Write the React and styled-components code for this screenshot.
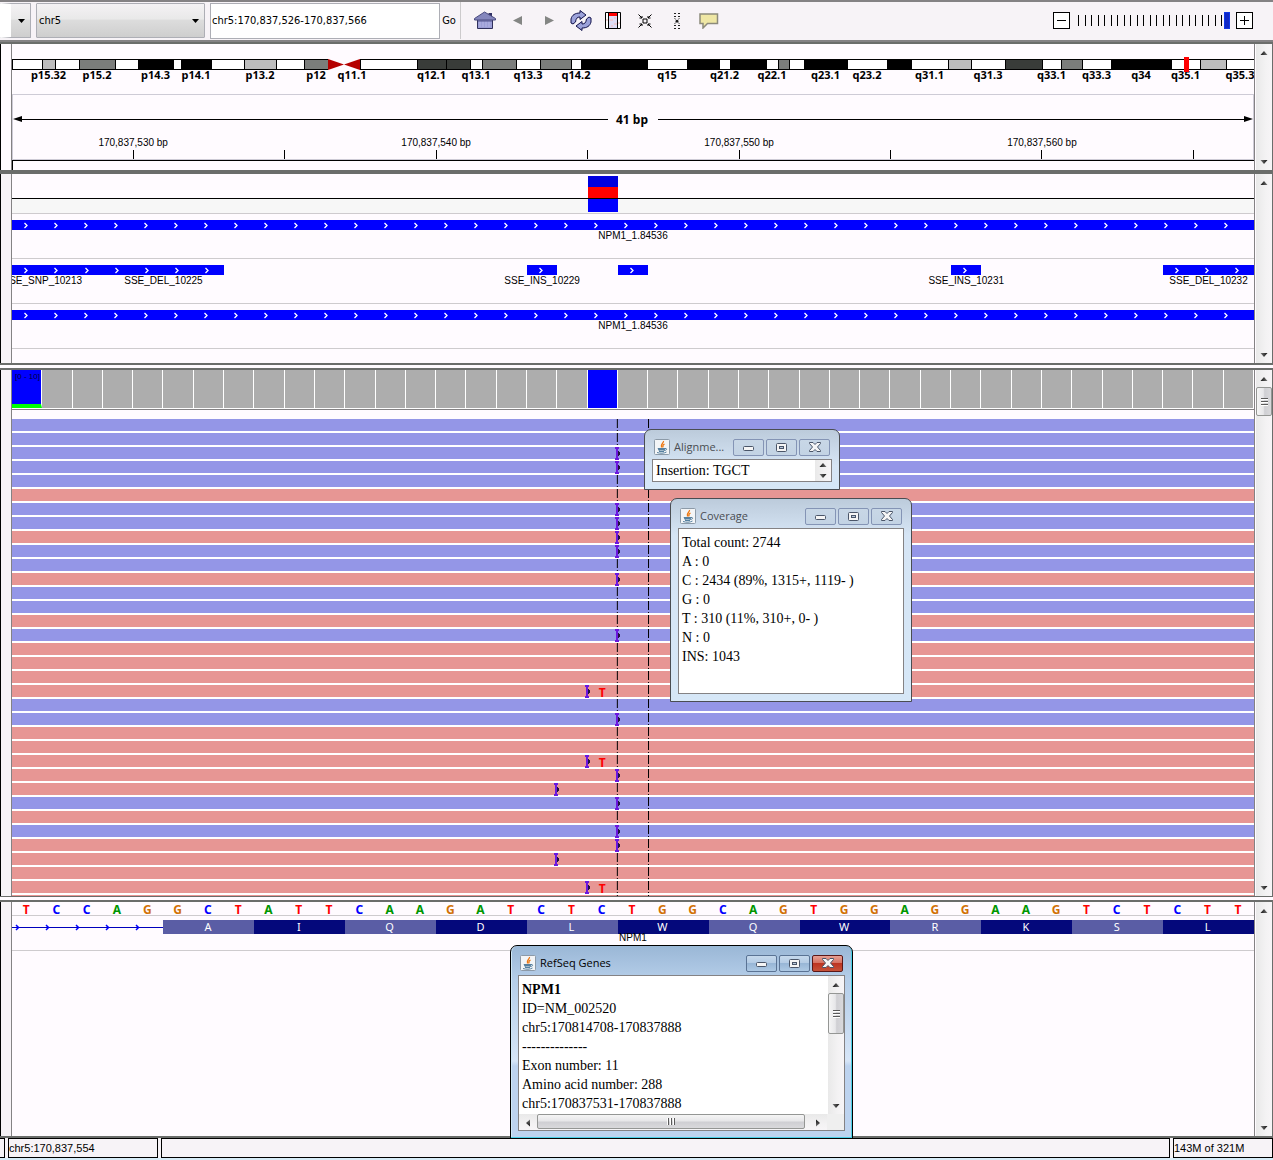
import React from 'react';
import styled, { createGlobalStyle, css } from 'styled-components';

const GlobalStyle = createGlobalStyle`
  * {
    box-sizing: border-box;
  }
  body {
    margin: 0;
    background: #fffbff;
    color: #000;
    font-family: 'DejaVu Sans Condensed', 'Noto Sans', sans-serif;
    font-size: 11px;
  }
  button, input, select {
    font: inherit;
    color: inherit;
    margin: 0;
    padding: 0;
  }
`;

const shades = {
  w: '#ffffff',
  l: '#bdbdbd',
  g: '#7b7d7b',
  d: '#393c39',
  k: '#000000',
};

// start position, stain, label
const bands = [
  [12, 'w'], [42, 'l', 'p15.32'], [55, 'w'], [79, 'g', 'p15.2'], [115, 'w'],
  [138, 'k', 'p14.3'], [173, 'w'], [181, 'k', 'p14.1'], [211, 'w'],
  [244, 'l', 'p13.2'], [276, 'w'], [304, 'g', 'p12'], [328, 'right'],
  [344, 'left', 'q11.1'], [360, 'w'], [417, 'd', 'q12.1'], [446, 'd'],
  [470, 'w', 'q13.1'], [482, 'g'], [516, 'w', 'q13.3'], [540, 'g'],
  [571, 'w', 'q14.2'], [581, 'k'], [647, 'w', 'q15'], [687, 'k'],
  [719, 'w', 'q21.2'], [730, 'k'], [766, 'w', 'q22.1'], [778, 'g'],
  [789, 'w'], [804, 'k', 'q23.1'], [847, 'w', 'q23.2'], [887, 'k'],
  [911, 'w', 'q31.1'], [948, 'l'], [971, 'w', 'q31.3'], [1005, 'd'],
  [1042, 'w', 'q33.1'], [1061, 'g'], [1082, 'w', 'q33.3'],
  [1111, 'k', 'q34'], [1171, 'w', 'q35.1'], [1200, 'l'], [1226, 'w', 'q35.3'],
];
const bandsEnd = 1254;

const marks = [
  '170,837,530 bp', '', '170,837,540 bp', '', '170,837,550 bp', '',
  '170,837,560 bp', '',
];

const wholeGene = [{ from: 1, to: 42, label: 'NPM1_1.84536' }];
const variants = [
  { from: 1, to: 3, label: 'SSE_SNP_10213' },
  { from: 3, to: 4 },
  { from: 4, to: 8, label: 'SSE_DEL_10225' },
  { from: 18, to: 19, label: 'SSE_INS_10229' },
  { from: 21, to: 22 },
  { from: 32, to: 33, label: 'SSE_INS_10231' },
  { from: 39, to: 42, label: 'SSE_DEL_10232' },
];

const strands = 'BBBBBPBBPBBPBBPBPPPPBBPPPPPBPBPPPPP'.split('');
const insertions = {
  2: 21, 3: 21, 6: 21, 7: 21, 8: 21, 9: 21, 11: 21, 15: 21, 19: 20, 21: 21,
  24: 20, 25: 21, 26: 19, 27: 21, 29: 21, 30: 21, 31: 19, 33: 20,
};
const mismatches = [19, 24, 33];

const sequence = 'TCCAGGCTATTCAAGATCTCTGGCAGTGGAGGAAGTCTCTT'.split('');
const baseColors = { A: '#009600', C: '#0000ff', G: '#d17105', T: '#ff0000' };
const aminoAcids = 'AIQDLWQWRKSL'.split('');

/* ---------- toolbar ---------- */

const Page = styled.div`
  position: relative;
  display: flex;
  flex-direction: column;
  min-height: 100vh;
  overflow: hidden;
`;

const Toolbar = styled.header`
  display: flex;
  align-items: center;
  height: 42px;
  padding: 0 20px 1px 0;
  background: #f7f3f7;
  border-top: 2px solid #848284;
  border-bottom: 2px solid #848284;
`;

const SelectBox = styled.div`
  display: grid;
  align-items: center;
  width: ${({ $width }) => $width}px;
  margin-right: 5px;
  > * {
    grid-area: 1 / 1;
  }
  svg {
    justify-self: end;
    margin-right: 6px;
    pointer-events: none;
  }
`;

const Select = styled.select`
  appearance: none;
  width: 100%;
  height: 35px;
  padding-left: 2px;
  border: 1px solid #adaeb5;
  border-radius: 1px;
  background: linear-gradient(#f4f2f4, #e9e9e9 45%, #dcdcdc 50%, #cecece);
  ${({ $editable }) =>
    $editable &&
    css`
      border-left: 11px solid #fff;
    `}
`;

const Locus = styled.input`
  width: 230px;
  height: 36px;
  padding-left: 1px;
  border: 1px solid #adaeb5;
  background: #fff;
`;

const GoButton = styled.button`
  width: 21px;
  height: 37px;
  margin-right: 8px;
  padding-right: 2px;
  border: 0;
  border-right: 1px solid #cccacc;
  background: transparent;
`;

const IconButton = styled.button`
  display: flex;
  align-items: center;
  justify-content: center;
  width: 32px;
  height: 32px;
  border: 0;
  background: transparent;
`;

const Zoom = styled.div`
  display: flex;
  gap: 6px;
  margin-left: auto;
`;

const ZoomButton = styled.button`
  display: flex;
  align-items: center;
  justify-content: center;
  width: 17px;
  height: 17px;
  border: 1px solid #000;
  background: #fff;
`;

const Slider = styled.div`
  display: grid;
  align-items: center;
  width: 154px;
  > * {
    grid-area: 1 / 1;
  }
`;

const Ticks = styled.div`
  display: flex;
  justify-content: space-between;
  height: 11px;
  padding: 0 8px 0 2px;
  i {
    width: 1px;
    background: #000;
  }
`;

const Range = styled.input`
  appearance: none;
  width: 100%;
  height: 17px;
  background: transparent;
  &::-webkit-slider-thumb {
    appearance: none;
    width: 6px;
    height: 17px;
    border: 1px solid #1038e7;
    background: #1028c6;
  }
`;

/* ---------- panels ---------- */

const Panel = styled.section`
  display: grid;
  grid-template-columns: 12px minmax(0, 1fr) 19px;
  flex: ${({ $grow }) => ($grow ? '1 0 auto' : 'none')};
  height: ${({ $height }) => ($height ? `${$height}px` : 'auto')};
  margin-top: ${({ $gap }) => ($gap ? 3 : 0)}px;
  border: 0 solid #6b6d6b;
  border-top-width: ${({ $top }) => $top || 2}px;
  border-bottom-width: ${({ $bottom }) => $bottom || 0}px;
`;

const Gutter = styled.div`
  border-left: 1px solid #000;
  border-right: 1px solid #848284;
  background: ${({ $plain }) => ($plain ? '#fffbff' : '#f7f3f7')};
`;

const Canvas = styled.div`
  position: relative;
  overflow: hidden;
  min-width: 0;
`;

const Rail = styled.div`
  display: flex;
  padding-left: 1px;
  border-left: 1px solid #848284;
  border-right: 1px solid #6b6d6b;
`;

const Bar = styled.div`
  display: flex;
  flex-direction: ${({ $across }) => ($across ? 'row' : 'column')};
  justify-content: space-between;
  flex: 1;
  background: linear-gradient(${({ $across }) => ($across ? '180deg' : '90deg')}, #e9e9e9, #f3f2f3 60%, #f7f5f7);
`;

const BarButton = styled.button`
  display: flex;
  align-items: center;
  justify-content: center;
  width: ${({ $across }) => ($across ? '18px' : '100%')};
  height: ${({ $short }) => ($short ? 11 : 17)}px;
  border: 0;
  background: transparent;
`;

const Thumb = styled.div`
  display: flex;
  align-items: center;
  justify-content: center;
  width: ${({ $across }) => ($across ? '268px' : '100%')};
  height: ${({ $across, $size }) => ($across ? 15 : $size)}px;
  margin-${({ $across }) => ($across ? 'right' : 'bottom')}: auto;
  border: 1px solid #949694;
  border-radius: 2px;
  background: linear-gradient(${({ $across }) => ($across ? '180deg' : '90deg')}, #f5f5f5, #e7e7e9 45%, #cfcfd3 55%, #d9d9dc);
  svg {
    transform: rotate(${({ $across }) => ($across ? 90 : 0)}deg);
  }
`;

const GenomeGrid = styled.div`
  display: grid;
  grid-template-columns: repeat(41, minmax(0, 1fr));
`;

/* ---------- ideogram and ruler ---------- */

const Ideogram = styled.div`
  display: flex;
  height: 50px;
  padding-top: 15px;
`;

const Band = styled.div`
  display: flex;
  flex-direction: column;
  align-items: center;
  flex: ${({ $size }) => $size} 1 0;
  min-width: 0;
  font: bold 11px/10px 'Noto Sans', sans-serif;
  white-space: nowrap;
  svg {
    display: block;
    width: 100%;
    height: 11px;
    flex: none;
  }
`;

const Stain = styled.div`
  width: 100%;
  height: 11px;
  flex: none;
  border: 1px solid #000;
  border-right: 0;
  background: ${({ $shade }) => shades[$shade]};
`;

const Position = styled.div`
  position: absolute;
  top: 13px;
  left: 94%;
  width: 5px;
  height: 15px;
  margin-left: 5px;
  background: #f00;
`;

const Ruler = styled.div`
  height: 66px;
  padding: 17px 0 1px;
  box-shadow: inset 0 0 0 1px #cecbd6;
`;

const Span = styled.div`
  display: flex;
  align-items: center;
  height: 16px;
  margin-bottom: 8px;
  padding: 0 1px;
  font: bold 12px/16px 'Noto Sans', sans-serif;
  span {
    width: 50px;
    padding: 2px 2px 0 0;
    text-align: center;
  }
`;

const Line = styled.div`
  flex: 1;
  height: 1px;
  background: #000;
`;

const Mark = styled.div`
  grid-column: ${({ $at }) => $at} / span 2;
  display: flex;
  flex-direction: column;
  align-items: center;
  justify-content: flex-end;
  height: 24px;
  font: 10px/14px 'Liberation Sans', sans-serif;
  white-space: nowrap;
  &::after {
    content: '';
    width: 1px;
    height: 9px;
    background: #000;
  }
`;

const RulerStrip = styled.div`
  height: 11px;
  border-top: 1px solid #000;
  border-left: 1px solid #000;
`;

/* ---------- feature tracks ---------- */

const VariantTrack = styled(GenomeGrid)`
  height: 40px;
  padding-top: 2px;
  border-bottom: 1px solid #cecbce;
  background: linear-gradient(#fffbff 24px, #000 24px 25px, #f7f7f7 25px);
`;

const Allele = styled.div`
  grid-column: 20;
  height: 36px;
  background: linear-gradient(#0000de 11px, #f00 11px 22px, #000 22px 23px, #00f 23px);
`;

const Track = styled(GenomeGrid)`
  height: 45px;
  padding-top: 6px;
  border-bottom: 1px solid #cecbce;
`;

const Feature = styled.div`
  grid-column: ${({ $from }) => $from} / ${({ $to }) => $to};
  display: flex;
  flex-direction: column;
  align-items: center;
  font: 10px/12px 'Liberation Sans', sans-serif;
  white-space: nowrap;
  svg {
    display: block;
    flex: none;
    width: 100%;
    height: 10px;
    background: #00f;
  }
`;

/* ---------- alignments ---------- */

const Coverage = styled(GenomeGrid)`
  height: 40px;
  margin-bottom: 9px;
  padding-bottom: 1px;
  background: #fff;
  border-bottom: 1px solid #848284;
`;

const Depth = styled.div`
  border-right: 1px solid #fff;
  border-bottom: ${({ $first }) => ($first ? '4px solid #00ff00' : '0')};
  background: ${({ $blue }) => ($blue ? '#0000ff' : '#adadad')};
  color: #00003c;
  font: 8px/14px 'Liberation Sans', sans-serif;
  padding-left: 3px;
  white-space: nowrap;
`;

const Read = styled(GenomeGrid)`
  height: 14px;
  border-bottom: 2px solid #fff;
  background: ${({ $strand }) => ($strand === 'B' ? '#9496e7' : '#e79694')};
  > * {
    grid-row: 1;
  }
  svg {
    position: relative;
    margin-left: -3px;
  }
`;

const Mismatch = styled.b`
  grid-column: 20;
  padding-right: 1px;
  color: #f00;
  font: bold 12px/15px 'Noto Sans', sans-serif;
  text-align: center;
`;

const Guides = styled.svg`
  position: absolute;
  top: 49px;
  left: 0;
  width: 100%;
  height: 477px;
  pointer-events: none;
`;

/* ---------- sequence ---------- */

const Sequence = styled(GenomeGrid)`
  height: 14px;
  border-bottom: 1px solid #cecbce;
  font: bold 12px/15px 'Noto Sans', sans-serif;
  text-align: center;
`;

const Base = styled.span`
  padding-right: 2px;
  color: ${({ $base }) => baseColors[$base]};
`;

const Gene = styled.div`
  height: 35px;
  padding-top: 4px;
  border-bottom: 1px solid #cecbce;
  font: 10px/8px 'Liberation Sans', sans-serif;
  text-align: center;
`;

const Exon = styled(GenomeGrid)`
  height: 14px;
  font: 11px/14px 'Noto Sans', sans-serif;
  svg {
    grid-column: 1 / 6;
    width: 100%;
    height: 14px;
  }
`;

const Amino = styled.span`
  grid-column: span 3;
  padding-right: 2px;
  color: #fff;
  background: ${({ $dark }) => ($dark ? '#04087b' : '#5a5da5')};
`;

/* ---------- status bar ---------- */

const Status = styled.footer`
  display: flex;
  gap: 3px;
  height: 22px;
  background: #f7f3f7;
  border-bottom: 2px solid #d6ebf7;
  font: 11px/18px 'Liberation Sans', sans-serif;
`;

const Cell = styled.div`
  width: ${({ $width }) => ($width ? `${$width}px` : 'auto')};
  flex: ${({ $width }) => ($width ? 'none' : 1)};
  border: 1px solid #000;
  border-left-width: ${({ $open }) => ($open ? 0 : 1)}px;
  white-space: nowrap;
`;

/* ---------- floating windows ---------- */

const Window = styled.div`
  position: absolute;
  left: ${({ $x }) => $x}px;
  top: ${({ $y }) => $y}px;
  display: flex;
  flex-direction: column;
  width: ${({ $width }) => $width}px;
  height: ${({ $height }) => $height}px;
  padding: 0 7px 7px;
  border: 1px solid #4a4d52;
  border-radius: 7px 7px 0 0;
  background: linear-gradient(#bccbdb, #d6e5f5 36px, #d6e7f7);
  ${({ $active }) =>
    $active &&
    css`
      border-color: #000;
      background: linear-gradient(#9ab7d6, #b5cee9 34px, #d6e5f7 115px, #bdd3ef 120px);
      box-shadow: inset -1px -1px 0 #4acfe7, inset 1px 0 0 #cfe8f7;
    `}
`;

const TitleBar = styled.div`
  display: flex;
  align-items: center;
  gap: 2px;
  height: 29px;
  flex: none;
  padding: 5px 2px 0;
  color: ${({ $active }) => ($active ? '#000' : '#4a4d52')};
  font: 11px/16px 'Open Sans', sans-serif;
  h2 {
    flex: 1;
    margin: 0 0 0 2px;
    font: inherit;
    white-space: nowrap;
  }
`;

const WindowButton = styled.button`
  display: flex;
  align-items: center;
  justify-content: center;
  width: 31px;
  height: 17px;
  padding-top: ${({ $low }) => ($low ? 3 : 0)}px;
  border: 1px solid ${({ $active }) => ($active ? '#5a7394' : '#8494b5')};
  border-radius: 2px;
  background: ${({ $active }) =>
    $active
      ? 'linear-gradient(#c6d9ec, #b5cce5 45%, #98b6d6 50%, #adc9e4)'
      : 'linear-gradient(#c8d7e6, #c3d3e4)'};
  ${({ $danger }) =>
    $danger &&
    css`
      border-color: #5a1818;
      background: linear-gradient(#e7a094, #d67363 45%, #bd3421 50%, #c65239);
    `}
`;

const Content = styled.div`
  flex: 1;
  display: grid;
  grid-template-columns: minmax(0, 1fr) auto;
  grid-template-rows: minmax(0, 1fr) auto;
  overflow: hidden;
  border: 1px solid #848284;
  background: #fff;
`;

const Text = styled.div`
  padding: ${({ $tight }) => ($tight ? '1px' : '4px')} 3px 0;
  overflow: hidden;
  font: 14px/19px 'Liberation Serif', serif;
  white-space: nowrap;
  p {
    margin: 0;
  }
`;

const Side = styled.div`
  display: flex;
  width: 16px;
`;

const Foot = styled.div`
  grid-column: 1 / 3;
  display: flex;
  height: 16px;
  padding-right: 17px;
  background: #efefef;
`;

/* ---------- drawings ---------- */

const Caret = () => (
  <svg width="7" height="4">
    <path d="M0 0H7L3.5 4Z" />
  </svg>
);

const arrowTurn = { up: 0, right: 90, down: 180, left: 270 };

const ScrollArrow = ({ to }) => (
  <svg width="8" height="8" viewBox="0 0 8 8">
    <defs>
      <linearGradient id={`arrow-${to}`}>
        <stop offset="0" stopColor="#111" />
        <stop offset="1" stopColor="#777" />
      </linearGradient>
    </defs>
    <path d="M0.5 6L4 2L7.5 6Z" fill={`url(#arrow-${to})`} transform={`rotate(${arrowTurn[to]} 4 4)`} />
  </svg>
);

const Grip = () => (
  <svg width="7" height="9">
    <path d="M0 1.5H7M0 4.5H7M0 7.5H7" stroke="#5a5a5a" />
    <path d="M0 2.5H7M0 5.5H7M0 8.5H7" stroke="#fff" />
  </svg>
);

const HomeIcon = () => (
  <svg width="22" height="19" viewBox="0 0 22 19">
    <path d="M3.500 8H18.500V17.500H3.500Z" fill="#9c9ed6" stroke="#30305c" />
    <path d="M14.500 2H18V6H14.500Z" fill="#303064" />
    <path d="M0.500 7.500L10.500 1L21.500 7.500V9H0.500Z" fill="#8486bd" stroke="#4a4a7e" />
    <path d="M5 11H17M5 13H17M5 15H17" stroke="#b6b6e4" strokeDasharray="2 1" />
    <path d="M4 10H18" stroke="#52528c" />
  </svg>
);

const RefreshIcon = () => (
  <svg width="22" height="21" viewBox="0 0 22 21" fill="#9ca2da" stroke="#10104a" strokeLinejoin="round">
    <path d="M1 13V9C2 5 5 3 10 3V0.500L16 5L10 9.500V7C7 7 6 8.500 5.500 12L3 14Z" />
    <path d="M21 8V12C20 16 17 18 12 18V20.500L6 16L12 11.500V14C15 14 16 12.500 16.500 9L19 7Z" />
  </svg>
);

const RegionIcon = () => (
  <svg width="16" height="17" viewBox="0 0 16 17">
    <path d="M0.500 0.500H15.500V16.500H0.500Z" fill="#fff" stroke="#000" />
    <path d="M4 4H12V16H4Z" fill="#dedcf5" />
    <path d="M4 1H12V4H4Z" fill="#f00" />
    <path d="M5 8H8M9 12H12M6 14H8M9 6H11M2 7V9M14 10V12" stroke="#f5b9b5" />
    <path d="M3.500 1V16M12.500 1V16" stroke="#000" />
  </svg>
);

const CollapseIcon = () => (
  <svg width="14" height="14" viewBox="0 0 14 14" fill="none" stroke="#000">
    <path d="M5 5H9V9H5Z" />
    <path d="M0.500 0.500L4 4M13.500 0.500L10 4M0.500 13.500L4 10M13.500 13.500L10 10" />
    <path d="M4 2V4H1.500M10 2V4H12.500M4 12V10H1.500M10 12V10H12.500" />
  </svg>
);

const ExpandIcon = () => (
  <svg width="8" height="16" viewBox="0 0 8 16" fill="none" stroke="#222">
    <path d="M1 0.500H7M1 3.500H7M1 12.500H7M1 15.500H7" strokeDasharray="2 2" />
    <path d="M1.500 5L3.500 7.500M6.500 5L4.500 7.500M1.500 11L3.500 8.500M6.500 11L4.500 8.500" strokeDasharray="1 1" />
    <path d="M3 7.500H5V9H3Z" fill="#000" />
  </svg>
);

const BubbleIcon = () => (
  <svg width="20" height="16" viewBox="0 0 20 16">
    <path d="M1 1H18.500V10.500H8.500L4 15V10.500H1Z" fill="#efe7a5" stroke="#8c8a7b" strokeWidth="1.500" />
  </svg>
);

const JavaIcon = () => (
  <svg width="16" height="16" viewBox="0 0 16 16">
    <rect x="0.500" y="0.500" width="15" height="15" rx="1" fill="#f3f5f7" stroke="#8c9aa8" />
    <path d="M9.500 2C10 4 6 5 7.500 8.500M10.500 5C8.500 6 8.500 7 9 8.500" fill="none" stroke="#ee7710" strokeWidth="1.300" />
    <path d="M4 9.500H11L10 12H5.500ZM11 9.500C13.500 9 13 11.500 10.500 11.500M3 13.500C6 14.500 10 14.500 12.500 13" fill="none" stroke="#56809f" />
    <path d="M5 10.500H10M5 12.500H10" stroke="#56809f" />
  </svg>
);

const MinimizeIcon = () => (
  <svg width="11" height="5">
    <rect x="0.500" y="0.500" width="10" height="4" rx="1" fill="#f5f5f5" stroke="#4a5568" />
  </svg>
);

const MaximizeIcon = () => (
  <svg width="11" height="9">
    <rect x="0.500" y="0.500" width="10" height="8" rx="1" fill="#f5f5f5" stroke="#4a5568" />
    <rect x="3.500" y="3.500" width="4" height="2" fill="#b9cadc" stroke="#4a5568" />
  </svg>
);

const CloseIcon = () => (
  <svg width="12" height="10" viewBox="0 0 12 10">
    <path d="M0.500 0.500H4L6 2.500L8 0.500H11.500V1.500L8.500 5L11.500 8.500V9.500H8L6 7.500L4 9.500H0.500V8.500L3.500 5L0.500 1.500Z" fill="#f5f5f5" stroke="#4a5568" strokeLinejoin="round" />
  </svg>
);

const Insertion = ({ at }) => (
  <svg width="6" height="13" style={{ gridColumn: at }}>
    <path d="M0 0H4V2H3V11H4V13H0V11H1V2H0Z" fill="#6b18de" />
    <path d="M3 4H4V5H5V8H4V9H3Z" fill="#201040" />
  </svg>
);

const Chevrons = () => (
  <svg>
    <rect width="100%" height="100%" fill="url(#chevrons)" />
  </svg>
);

/* ---------- parts ---------- */

const Scrollbar = ({ thumb, across, short }) => (
  <Bar $across={across}>
    <BarButton $across={across} $short={short} aria-label={across ? 'Scroll left' : 'Scroll up'}>
      <ScrollArrow to={across ? 'left' : 'up'} />
    </BarButton>
    {thumb && (
      <Thumb $across={across} $size={thumb}>
        <Grip />
      </Thumb>
    )}
    <BarButton $across={across} $short={short} aria-label={across ? 'Scroll right' : 'Scroll down'}>
      <ScrollArrow to={across ? 'right' : 'down'} />
    </BarButton>
  </Bar>
);

const DataPanel = ({ children, plain, thumb, ...size }) => (
  <Panel {...size}>
    <Gutter $plain={plain} />
    <Canvas>{children}</Canvas>
    <Rail>
      <Scrollbar thumb={thumb} />
    </Rail>
  </Panel>
);

const FeatureTrack = ({ features }) => (
  <Track>
    {features.map(({ from, to, label }) => (
      <Feature key={from} $from={from} $to={to}>
        <Chevrons />
        {label}
      </Feature>
    ))}
  </Track>
);

const InfoWindow = ({ title, active, x, y, width, height, children }) => (
  <Window $x={x} $y={y} $width={width} $height={height} $active={active}>
    <TitleBar $active={active}>
      <JavaIcon />
      <h2>{title}</h2>
      <WindowButton $active={active} $low aria-label="Minimize">
        <MinimizeIcon />
      </WindowButton>
      <WindowButton $active={active} aria-label="Maximize">
        <MaximizeIcon />
      </WindowButton>
      <WindowButton $active={active} $danger={active} aria-label="Close">
        <CloseIcon />
      </WindowButton>
    </TitleBar>
    <Content>{children}</Content>
  </Window>
);

const App = () => {
  return (
    <Page>
      <GlobalStyle />
      <Toolbar>
        <SelectBox $width={31}>
          <Select $editable aria-label="Genome" />
          <Caret />
        </SelectBox>
        <SelectBox $width={169}>
          <Select aria-label="Chromosome">
            <option>chr5</option>
          </Select>
          <Caret />
        </SelectBox>
        <Locus aria-label="Locus" defaultValue="chr5:170,837,526-170,837,566" />
        <GoButton>Go</GoButton>
        <IconButton aria-label="Home"><HomeIcon /></IconButton>
        <IconButton aria-label="Back">
          <svg width="9" height="9"><path d="M9 0V9L0 4.500Z" fill="#848684" /></svg>
        </IconButton>
        <IconButton aria-label="Forward">
          <svg width="9" height="9"><path d="M0 0V9L9 4.500Z" fill="#848684" /></svg>
        </IconButton>
        <IconButton aria-label="Refresh"><RefreshIcon /></IconButton>
        <IconButton aria-label="Region of interest"><RegionIcon /></IconButton>
        <IconButton aria-label="Fit to window"><CollapseIcon /></IconButton>
        <IconButton aria-label="Expand"><ExpandIcon /></IconButton>
        <IconButton aria-label="Popup text"><BubbleIcon /></IconButton>
        <Zoom>
          <ZoomButton aria-label="Zoom out">
            <svg width="9" height="9"><path d="M0 4.500H9" stroke="#000" /></svg>
          </ZoomButton>
          <Slider>
            <Ticks>
              {Array.from({ length: 23 }, (_, i) => <i key={i} />)}
            </Ticks>
            <Range type="range" min="0" max="23" defaultValue="23" aria-label="Zoom" />
          </Slider>
          <ZoomButton aria-label="Zoom in">
            <svg width="9" height="9"><path d="M0 4.500H9M4.500 0V9" stroke="#000" /></svg>
          </ZoomButton>
        </Zoom>
      </Toolbar>

      <DataPanel plain $height={128}>
        <Ideogram>
          {bands.map(([start, kind, label], index) => {
            const end = index + 1 < bands.length ? bands[index + 1][0] : bandsEnd;
            return (
              <Band key={start} $size={end - start}>
                {shades[kind] ? (
                  <Stain $shade={kind} />
                ) : (
                  <svg viewBox="0 0 16 11" preserveAspectRatio="none">
                    <path d={kind === 'right' ? 'M0 0L16 5.500L0 11Z' : 'M16 0L0 5.500L16 11Z'} fill="#b50000" />
                  </svg>
                )}
                {label}
              </Band>
            );
          })}
        </Ideogram>
        <Position />
        <Ruler>
          <Span>
            <svg width="9" height="6"><path d="M9 0V6L0 3Z" /></svg>
            <Line />
            <span>41 bp</span>
            <Line />
            <svg width="9" height="6"><path d="M0 0V6L9 3Z" /></svg>
          </Span>
          <GenomeGrid>
            {marks.map((mark, index) => (
              <Mark key={index} $at={4 + index * 5}>
                {mark}
              </Mark>
            ))}
          </GenomeGrid>
        </Ruler>
        <RulerStrip />
      </DataPanel>

      <DataPanel $height={195} $top={4} $bottom={2}>
        <svg width="0" height="0" style={{ position: 'absolute' }}>
          <defs>
            <pattern id="chevrons" width="30" height="10" patternUnits="userSpaceOnUse">
              <path d="M12.500 3L15 5.500L12.500 8" fill="none" stroke="#fff" strokeWidth="1.300" />
            </pattern>
            <pattern id="intron" width="30" height="14" patternUnits="userSpaceOnUse">
              <path d="M0 7.500H30" stroke="#0000bd" />
              <path d="M4 5L6.500 7.500L4 10" fill="none" stroke="#0000ff" strokeWidth="1.500" />
            </pattern>
          </defs>
        </svg>
        <VariantTrack>
          <Allele />
        </VariantTrack>
        <FeatureTrack features={wholeGene} />
        <FeatureTrack features={variants} />
        <FeatureTrack features={wholeGene} />
      </DataPanel>

      <DataPanel thumb={29} $gap $height={529} $bottom={1}>
        <Coverage>
          {sequence.map((_, index) => (
            <Depth key={index} $first={index === 0} $blue={index === 0 || index === 19}>
              {index === 0 && '[0 - 10]'}
            </Depth>
          ))}
        </Coverage>
        <Guides>
          <line x1="48.740%" x2="48.740%" y2="100%" stroke="#000" strokeDasharray="9 2 1 2" />
          <line x1="51.250%" x2="51.250%" y2="100%" stroke="#000" strokeDasharray="9 2 1 2" />
        </Guides>
        {strands.map((strand, row) => (
          <Read key={row} $strand={strand}>
            {insertions[row] && <Insertion at={insertions[row]} />}
            {mismatches.includes(row) && <Mismatch>T</Mismatch>}
          </Read>
        ))}
      </DataPanel>

      <DataPanel $gap $grow $bottom={2}>
        <Sequence>
          {sequence.map((base, index) => (
            <Base key={index} $base={base}>
              {base}
            </Base>
          ))}
        </Sequence>
        <Gene>
          <Exon>
            <svg>
              <rect width="100%" height="100%" fill="url(#intron)" />
            </svg>
            {aminoAcids.map((amino, index) => (
              <Amino key={index} $dark={index % 2 === 1}>
                {amino}
              </Amino>
            ))}
          </Exon>
          NPM1
        </Gene>
      </DataPanel>

      <Status>
        <Cell $width={5} $open />
        <Cell $width={150}>chr5:170,837,554</Cell>
        <Cell />
        <Cell $width={100}>143M of 321M</Cell>
      </Status>

      <InfoWindow title="Alignme..." x={644} y={429} width={196} height={61}>
        <Text $tight>Insertion: TGCT</Text>
        <Side>
          <Scrollbar short />
        </Side>
      </InfoWindow>

      <InfoWindow title="Coverage" x={670} y={498} width={242} height={204}>
        <Text>
          <p>Total count: 2744</p>
          <p>A : 0</p>
          <p>C : 2434 (89%, 1315+, 1119- )</p>
          <p>G : 0</p>
          <p>T : 310 (11%, 310+, 0- )</p>
          <p>N : 0</p>
          <p>INS: 1043</p>
        </Text>
      </InfoWindow>

      <InfoWindow title="RefSeq Genes" active x={510} y={945} width={343} height={194}>
        <Text>
          <p><b>NPM1</b></p>
          <p>ID=NM_002520</p>
          <p>chr5:170814708-170837888</p>
          <p>--------------</p>
          <p>Exon number: 11</p>
          <p>Amino acid number: 288</p>
          <p>chr5:170837531-170837888</p>
        </Text>
        <Side>
          <Scrollbar thumb={41} />
        </Side>
        <Foot>
          <Scrollbar across thumb={268} />
        </Foot>
      </InfoWindow>
    </Page>
  );
};

export default App;
